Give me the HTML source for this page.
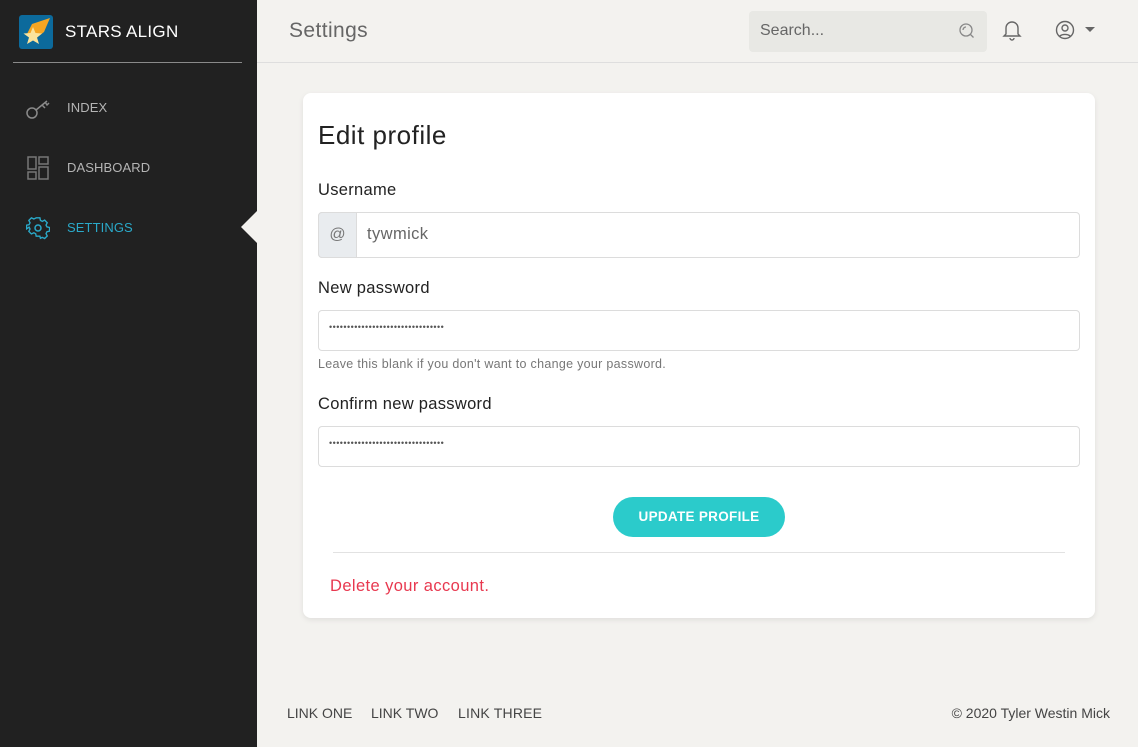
<!DOCTYPE html>
<html><head><meta charset="utf-8"><style>
*{box-sizing:border-box;margin:0;padding:0}
body{width:1138px;height:747px;background:#f3f2ef;font-family:"Liberation Sans",sans-serif;position:relative;overflow:hidden;color:#212529}
.sb{position:absolute;left:0;top:0;width:257px;height:747px;background:#212121}
.abs{position:absolute}
.nav{position:absolute;left:67px;font-size:13px;color:#b5b5b5;letter-spacing:0.1px}
.lbl{position:absolute;left:318px;font-size:16.5px;color:#222;letter-spacing:0.3px}
.inp{position:absolute;left:318px;width:762px;border:1px solid #dcdcdc;border-radius:4px;background:#fff}
.dots{position:absolute;left:10px;top:11px;font-size:9px;color:#555;letter-spacing:0.45px}
</style></head><body>
<div class="sb"></div>
<div class="abs" style="left:19px;top:15px;width:34px;height:34px;background:#0c6a9c;border-radius:3px"></div>
<svg class="abs" style="left:19px;top:15px" width="34" height="34" viewBox="0 0 34 34"><path d="M31 3 L13 9 L8 19 L15 25 L25 17 Z" fill="#f5a623"/><path d="M14 12 L16.5 18 L23 18.5 L18 22.5 L20 29 L14 25.5 L8 29 L10 22.5 L4.5 18.5 L11.5 18 Z" fill="#fbe39b"/></svg>
<div class="abs" style="left:65px;top:22px;font-size:17px;color:#fff;letter-spacing:0.3px">STARS ALIGN</div>
<div class="abs" style="left:13px;top:62px;width:229px;height:1px;background:#8a8a8a"></div>
<svg class="abs" style="left:25px;top:96px" width="26" height="24" viewBox="0 0 26 24"><circle cx="7" cy="17" r="5" fill="none" stroke="#8a8a8a" stroke-width="1.5"/><path d="M11 14 L22 5 M17 9 L20 12 M20 6 L22 9 L24 7" fill="none" stroke="#8a8a8a" stroke-width="1.5"/></svg>
<div class="nav" style="top:100px">INDEX</div>
<svg class="abs" style="left:27px;top:156px" width="22" height="24" viewBox="0 0 22 24"><g fill="none" stroke="#777" stroke-width="1.5"><rect x="1" y="1" width="8" height="12"/><rect x="12" y="1" width="9" height="7"/><rect x="1" y="16" width="8" height="7"/><rect x="12" y="11" width="9" height="12"/></g></svg>
<div class="nav" style="top:160px">DASHBOARD</div>
<svg class="abs" style="left:26px;top:216px" width="24" height="24" viewBox="0 0 24 24"><g fill="none" stroke="#2aa9c9" stroke-width="1.5"><circle cx="12" cy="12" r="3"/><path d="M10 2h4l.6 2.8 2 1 2.6-1.3 2.8 2.8-1.3 2.6 1 2 2.8.6v4l-2.8.6-1 2 1.3 2.6-2.8 2.8-2.6-1.3-2 1L14 22h-4l-.6-2.8-2-1-2.6 1.3-2.8-2.8 1.3-2.6-1-2L-.5 14v-4l2.8-.6 1-2-1.3-2.6 2.8-2.8 2.6 1.3 2-1z" transform="translate(1 0) scale(.92)"/></g></svg>
<div class="nav" style="top:220px;color:#2aa9c9">SETTINGS</div>
<div class="abs" style="left:241px;top:211px;width:0;height:0;border-top:16px solid transparent;border-bottom:16px solid transparent;border-right:16px solid #f3f2ef"></div>
<div class="abs" style="left:289px;top:19px;font-size:21px;color:#666;letter-spacing:0.4px">Settings</div>
<div class="abs" style="left:257px;top:62px;width:881px;height:1px;background:#dedede"></div>
<div class="abs" style="left:749px;top:11px;width:238px;height:41px;background:#e8e8e4;border-radius:4px"></div>
<div class="abs" style="left:760px;top:22px;font-size:16px;color:#666">Search...</div>
<svg class="abs" style="left:957px;top:21px" width="20" height="20" viewBox="0 0 20 20"><circle cx="9" cy="9" r="6" fill="none" stroke="#888" stroke-width="1.3"/><path d="M13 13l3.5 3.5M6 9a3 3 0 0 1 3-3" stroke="#888" stroke-width="1.3" fill="none"/></svg>
<svg class="abs" style="left:1002px;top:19px" width="20" height="22" viewBox="0 0 20 22"><path d="M4 15V9a6 6 0 0 1 12 0v6l2 2H2z M8 19a2 2 0 0 0 4 0" fill="none" stroke="#666" stroke-width="1.4"/></svg>
<svg class="abs" style="left:1054px;top:19px" width="22" height="22" viewBox="0 0 22 22"><circle cx="11" cy="11" r="8.5" fill="none" stroke="#666" stroke-width="1.4"/><circle cx="11" cy="9" r="3" fill="none" stroke="#666" stroke-width="1.4"/><path d="M5.5 17.3a7 5 0 0 1 11 0" fill="none" stroke="#666" stroke-width="1.4"/></svg>
<div class="abs" style="left:1085px;top:27px;border-left:5px solid transparent;border-right:5px solid transparent;border-top:5px solid #666"></div>
<div class="abs" style="left:303px;top:93px;width:792px;height:525px;background:#fff;border-radius:8px;box-shadow:0 2px 6px rgba(0,0,0,0.08)"></div>
<div class="abs" style="left:318px;top:120px;font-size:26px;color:#222;letter-spacing:0.5px">Edit profile</div>
<div class="lbl" style="top:181px">Username</div>
<div class="inp" style="top:212px;height:46px"></div>
<div class="abs" style="left:318px;top:212px;width:39px;height:46px;background:#e9ecef;border:1px solid #dcdcdc;border-radius:4px 0 0 4px;text-align:center;line-height:44px;color:#777;font-size:16px">@</div>
<div class="abs" style="left:367px;top:225px;font-size:16.5px;color:#666;letter-spacing:0.4px">tywmick</div>
<div class="lbl" style="top:279px">New password</div>
<div class="inp" style="top:310px;height:41px"><div class="dots">••••••••••••••••••••••••••••••••</div></div>
<div class="abs" style="left:318px;top:357px;font-size:12.5px;color:#777;letter-spacing:0.3px">Leave this blank if you don't want to change your password.</div>
<div class="lbl" style="top:395px">Confirm new password</div>
<div class="inp" style="top:426px;height:41px"><div class="dots">••••••••••••••••••••••••••••••••</div></div>
<div class="abs" style="left:613px;top:497px;width:172px;height:40px;background:#2bcbcb;border-radius:20px;color:#fff;font-weight:bold;font-size:13.5px;text-align:center;line-height:40px;letter-spacing:0.3px">UPDATE PROFILE</div>
<div class="abs" style="left:333px;top:552px;width:732px;height:1px;background:#e2e2e2"></div>
<div class="abs" style="left:330px;top:577px;font-size:16.5px;color:#e8384f;letter-spacing:0.4px">Delete your account.</div>
<div class="abs" style="left:287px;top:705px;font-size:14px;color:#444">LINK ONE</div>
<div class="abs" style="left:371px;top:705px;font-size:14px;color:#444">LINK TWO</div>
<div class="abs" style="left:458px;top:705px;font-size:14px;color:#444;letter-spacing:0.2px">LINK THREE</div>
<div class="abs" style="right:28px;top:705px;font-size:14px;color:#444">© 2020 Tyler Westin Mick</div>
</body></html>
